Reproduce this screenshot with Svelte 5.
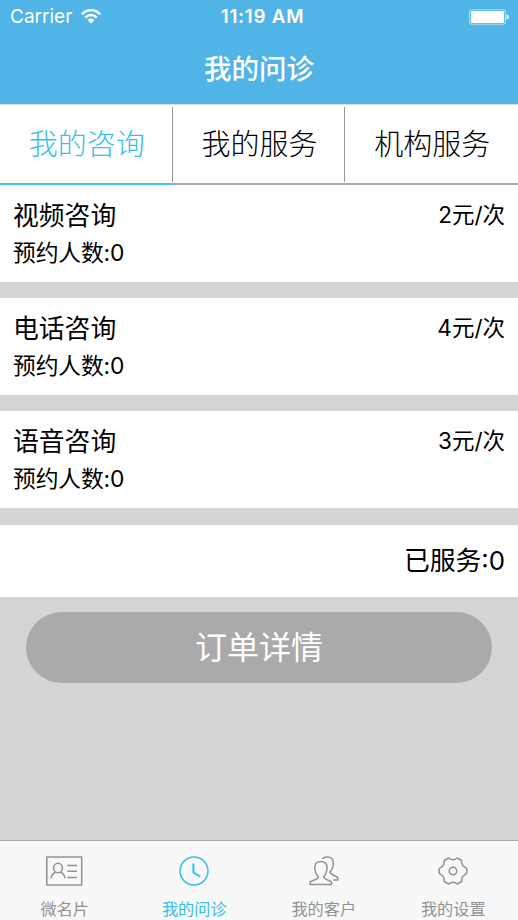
<script>
  const tabs = ['我的咨询', '我的服务', '机构服务'];
  const services = [
    { name: '视频咨询', price: '2元/次', booked: 0 },
    { name: '电话咨询', price: '4元/次', booked: 0 },
    { name: '语音咨询', price: '3元/次', booked: 0 }
  ];
  const nav = [
    { icon: 'card', label: '微名片' },
    { icon: 'clock', label: '我的问诊' },
    { icon: 'people', label: '我的客户' },
    { icon: 'gear', label: '我的设置' }
  ];
  let tab = $state(0);
  let page = $state(1);
</script>

<div class="screen">
  <header>
    <div class="status">
      <div class="carrier">
        <span>Carrier</span>
        <svg width="20" height="15" viewBox="0 0 20 15" fill="none" stroke="#fff" stroke-width="2.5">
          <path d="M.9 5.3C6-.4 14-.4 19.1 5.3M4.2 8.6c3.3-3.5 8.3-3.5 11.6 0" />
          <path d="M10 14.4 6.5 10.9q3.5-2.8 7 0Z" fill="#fff" stroke="none" />
        </svg>
      </div>
      <div class="time">11:19 AM</div>
      <div class="power">
        <svg width="40" height="16" viewBox="0 0 40 16">
          <rect x=".6" y=".7" width="35.8" height="14.6" rx="2.2" fill="none" stroke="#b0dcf3" stroke-width="1.1" />
          <rect x="2" y="2" width="33" height="12" rx="1" fill="#fff" />
          <path d="M37.6 5.2q2.2.6 2.2 2.8t-2.2 2.8Z" fill="#fff" />
        </svg>
      </div>
    </div>
    <h1>我的问诊</h1>
  </header>

  <div class="tabs">
    {#each tabs as t, i}
      <button class="tab" class:active={tab === i} onclick={() => (tab = i)}><span>{t}</span></button>
    {/each}
  </div>

  <main>
    {#each services as s}
      <section class="service">
        <div class="line">
          <span class="name">{s.name}</span>
          <span class="price">{s.price}</span>
        </div>
        <div class="booked">预约人数:{s.booked}</div>
      </section>
    {/each}
    <section class="served">已服务:0</section>
    <button class="detail">订单详情</button>
  </main>

  <nav>
    {#each nav as n, i}
      <button class="item" class:active={page === i} onclick={() => (page = i)}>
        {#if n.icon === 'card'}
          <svg width="37" height="30" viewBox="0 0 37 30">
            <rect x=".8" y="1.1" width="34.9" height="27.8" />
            <ellipse cx="12" cy="12" rx="4.4" ry="4.7" />
            <path d="M5 22.3c.5-3.3 2.1-5.1 4.6-6M14.4 16.3c2.5.9 4.1 2.7 4.6 6M21.3 9.5H31M21.3 15.3H31M21.3 21.4H31" />
          </svg>
        {:else if n.icon === 'clock'}
          <svg width="30" height="30" viewBox="0 0 30 30">
            <circle cx="15" cy="15" r="14" />
            <path d="M14.4 7.5v9l6.8 4" stroke-width="2" />
          </svg>
        {:else if n.icon === 'people'}
          <svg width="30" height="30" viewBox="0 0 30 30">
            <path d="M11.7 5.6C7.7 5.6 5.8 7.8 5.8 11.4c0 4.4 1.2 7.1 3.6 9.4L7.8 23 1.2 25.6v2.9h21.3v-2.9L16.3 23l-1.9-2.2c2.4-2.3 3.6-5 3.6-9.4 0-3.6-2.1-5.8-6.3-5.8Z" />
            <path d="M13.3 3.1C14.7 1.6 16.4 1 18.4 1c3.8 0 5.9 2.2 5.9 6 0 4.1-1 6.8-3.4 9.1l1.5 1.9 6.4 3.5v2.4h-4.6" />
          </svg>
        {:else}
          <svg width="30" height="30" viewBox="0 0 30 30">
            <circle cx="15" cy="15" r="3.7" />
            <path d="M10.7 2Q15 5.4 19.3 2L23.7 4.5Q23.1 9.8 28.3 12.1Q29.5 15 28.3 17.9Q23.1 20.2 23.7 25.5L19.3 28Q15 24.6 10.7 28L6.3 25.5Q6.9 20.2 1.7 17.9Q.5 15 1.7 12.1Q6.9 9.8 6.3 4.5Z" />
          </svg>
        {/if}
        <span>{n.label}</span>
      </button>
    {/each}
  </nav>
</div>

<style>
  :global(body) { margin: 0; }
  .screen {
    width: 518px; height: 920px; overflow: hidden;
    display: flex; flex-direction: column;
    background: #d5d5d5; color: #000;
    font-family: Inter, "Noto Sans CJK SC", sans-serif;
  }
  button {
    border: 0; padding: 0; margin: 0; background: none;
    font: inherit; color: inherit; border-radius: 0;
  }
  header { flex: none; height: 104px; background: #50b4e6; color: #fff; }
  .status {
    display: grid; grid-template-columns: 1fr auto 1fr; align-items: center;
    height: 33px; padding: 0 9px 0 10px; font-size: 19px;
  }
  .carrier { display: flex; align-items: center; gap: 9px; letter-spacing: 0; }
  .time { font-weight: 600; font-size: 18.8px; letter-spacing: .75px; padding-left: 6px; }
  .power { display: flex; justify-content: flex-end; }
  h1 {
    margin: 0; height: 71px; line-height: 72px; text-align: center;
    font-size: 27.5px; font-weight: 500;
  }
  .tabs {
    flex: none; display: flex; height: 81px; background: #fff;
    box-sizing: border-box; border-top: 1px solid #d8dde0;
  }
  .tab {
    flex: 1; display: flex; box-sizing: border-box; height: 80px;
    padding: 2px 0; border-bottom: 2px solid #ababab;
    font-size: 29px; font-weight: 300;
  }
  .tab span {
    flex: 1; height: 75px; line-height: 76px; text-align: center;
    padding-left: 2px; border-right: 1.5px solid #999; box-sizing: border-box;
  }
  .tab:last-child span { border-right: 0; padding-left: 1px; }
  .tab.active { color: #36c1ec; border-bottom-color: #43c3ee; }
  main { flex: 1; }
  .service {
    height: 97px; margin-bottom: 16.2px; padding: 8px 13px 0;
    box-sizing: border-box; background: #fff;
  }
  .line { display: flex; justify-content: space-between; align-items: center; height: 40px; }
  .name { font-size: 25.8px; }
  .price { font-size: 22.5px; }
  .booked { height: 35px; line-height: 39px; font-size: 22.8px; letter-spacing: -.15px; }
  .served {
    height: 72px; line-height: 71px; padding: 0 13px;
    text-align: right; background: #fff; font-size: 25.8px;
  }
  .detail {
    display: block; width: 466px; height: 71px; margin: 15.8px 26px 0;
    padding-bottom: 5px; box-sizing: border-box;
    border-radius: 36px; background: #aaa; color: #fff; font-size: 32px;
  }
  nav {
    flex: none; height: 80px; box-sizing: border-box; display: flex;
    border-top: 1.5px solid #aaa; background: #f8f8f8; color: #929292;
  }
  .item {
    flex: 1; display: flex; flex-direction: column; align-items: center;
    justify-content: flex-start; height: 78px; box-sizing: border-box;
    padding-top: 15px; font-size: 16.2px;
  }
  .item svg { flex: none; fill: none; stroke: currentColor; stroke-width: 1.5; stroke-linejoin: round; }
  .item span { flex: none; margin-top: 11px; line-height: 24px; white-space: nowrap; }
  .item.active { color: #36bfe8; }
</style>
